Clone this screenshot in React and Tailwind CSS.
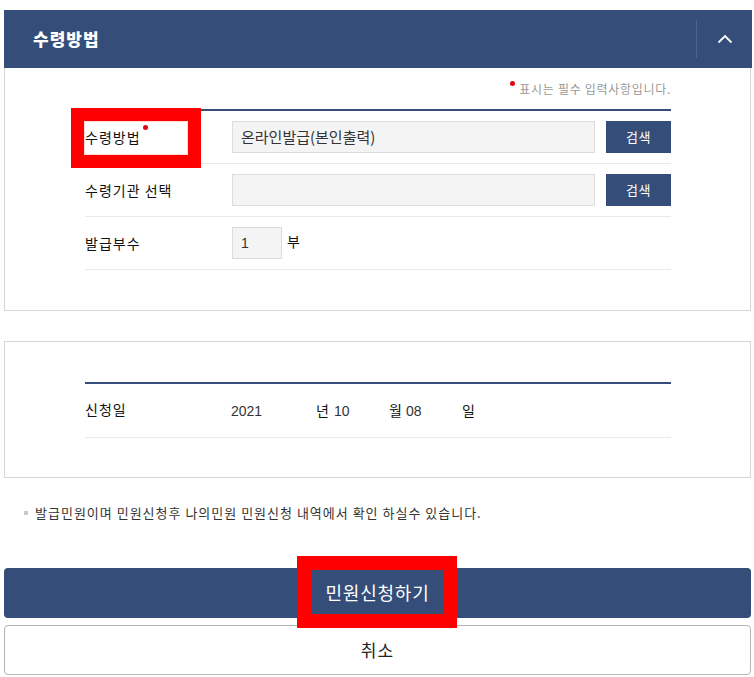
import React from "react";

const KR = { fontFamily: '"Noto Sans CJK KR", "Noto Sans", sans-serif' };
const NUM = { fontFamily: '"Liberation Sans", "Noto Sans CJK KR", sans-serif' };

function Row({ label, children, dot }) {
  return (
    <div className="flex items-center h-[53px] border-b border-[#e9e9e9]">
      <div className="w-[147px] text-[14px] text-[#111] tracking-[1px] relative" style={KR}>
        <span className="relative">
          {label}
          {dot && <span className="absolute -right-[7px] top-[-2px] w-[5px] h-[5px] rounded-full bg-[#e60012]" />}
        </span>
      </div>
      {children}
    </div>
  );
}

export default function App() {
  return (
    <div className="w-[754px] h-[677px] bg-white pt-[10px] overflow-hidden" style={KR}>
      <div className="ml-[4px] w-[748px]">
        {/* Header */}
        <div className="h-[58px] bg-[#344d79] flex items-center">
          <div className="flex-1 pl-[29px] text-white text-[17px] font-extrabold tracking-[1px]">수령방법</div>
          <div className="w-px h-[38px] bg-[#4d6390]" />
          <div className="w-[55px] flex items-center justify-center">
            <svg width="16" height="10" viewBox="0 0 16 10" fill="none">
              <path d="M1.5 8.5 L8 2 L14.5 8.5" stroke="white" strokeWidth="1.8" />
            </svg>
          </div>
        </div>

        {/* Section 1 */}
        <div className="w-[747px] border border-t-0 border-[#d6d6d6] pl-[80px] pr-[79px] pt-[12px] pb-[40px]">
          <div className="flex justify-end items-start h-[29px] text-[12px] text-[#999] tracking-[0.7px]">
            <span className="w-[5px] h-[5px] rounded-full bg-[#e60012] mt-[1px] mr-[4px]" />
            <span className="leading-[18px]">표시는 필수 입력사항입니다.</span>
          </div>
          <div className="relative border-t-2 border-[#344d79]">
            <div className="absolute left-[-14px] top-[-3px] w-[130px] h-[60px] border-[13px] border-[#ff0000] z-10 pointer-events-none">
              <div className="w-full h-full border border-[#ffd5d5]" />
            </div>
            <Row label="수령방법" dot>
              <div className="w-[363px] h-[32px] bg-[#f4f4f4] border border-[#dcdcdc] flex items-center pl-[8px] text-[15px] text-[#333]">
                온라인발급(본인출력)
              </div>
              <button className="ml-[11px] w-[65px] h-[32px] bg-[#344d79] text-white text-[13px] tracking-[0.5px]">검색</button>
            </Row>
            <Row label="수령기관 선택">
              <div className="w-[363px] h-[32px] bg-[#f4f4f4] border border-[#dcdcdc]" />
              <button className="ml-[11px] w-[65px] h-[32px] bg-[#344d79] text-white text-[13px] tracking-[0.5px]">검색</button>
            </Row>
            <Row label="발급부수">
              <div className="w-[50px] h-[32px] bg-[#f4f4f4] border border-[#dcdcdc] flex items-center pl-[8px] text-[14px] text-[#333]" style={NUM}>
                1
              </div>
              <span className="ml-[5px] self-start mt-[14px] text-[14px] text-[#111]">부</span>
            </Row>
          </div>
        </div>

        {/* Section 2 */}
        <div className="mt-[30px] w-[747px] h-[137px] border border-[#d6d6d6] pl-[80px] pr-[79px] pt-[40px]">
          <div className="border-t-2 border-[#344d79]">
            <div className="flex items-center h-[54px] border-b border-[#e9e9e9] text-[14px] text-[#111]">
              <div className="w-[146px] mb-[2px] tracking-[1px]">신청일</div>
              <span className="w-[85px] mt-[2px] text-[#333]" style={NUM}>2021</span>
              <span className="w-[18px]">년</span>
              <span className="w-[55px] mt-[2px] text-[#333]" style={NUM}>10</span>
              <span className="w-[17px]">월</span>
              <span className="w-[56px] mt-[2px] text-[#333]" style={NUM}>08</span>
              <span>일</span>
            </div>
          </div>
        </div>

        {/* Note */}
        <div className="mt-[25px] flex items-center pl-[20px] text-[13px] text-[#333] tracking-[1px]">
          <span className="w-[4px] h-[4px] bg-[#c8c8c8] mr-[7px]" />
          <span>발급민원이며 민원신청후 나의민원 민원신청 내역에서 확인 하실수 있습니다.</span>
        </div>

        {/* Buttons */}
        <div className="mt-[45px] relative">
          <button className="w-[747px] h-[50px] rounded-[4px] bg-[#344d79] text-white text-[18px] tracking-[0.8px] flex items-center justify-center">
            민원신청하기
          </button>
          <div className="absolute left-[293px] top-[-12px] w-[160px] h-[72px] border-[14px] border-[#ff0000] pointer-events-none" />
          <button className="mt-[7px] w-[747px] h-[50px] rounded-[4px] bg-white border border-[#b5b5b5] text-[#222] text-[17px] tracking-[1px] flex items-center justify-center">
            취소
          </button>
        </div>
      </div>
    </div>
  );
}
